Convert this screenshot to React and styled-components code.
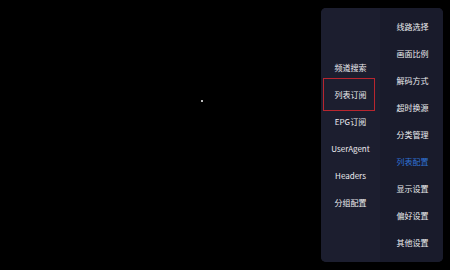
import React, { useState } from 'react';
import styled, { createGlobalStyle } from 'styled-components';

const GlobalStyle = createGlobalStyle`
  html, body {
    margin: 0;
    padding: 0;
    background: #000;
  }
  body {
    font-family: "Noto Sans CJK SC", "Noto Sans", sans-serif;
  }
`;

const leftItems = ['频道搜索', '列表订阅', 'EPG订阅', 'UserAgent', 'Headers', '分组配置'];
const rightItems = ['线路选择', '画面比例', '解码方式', '超时换源', '分类管理', '列表配置', '显示设置', '偏好设置', '其他设置'];

function App() {
  const [focused, setFocused] = useState(1);
  const [active, setActive] = useState(5);

  return (
    <>
      <GlobalStyle />
      <Screen>
        <Dot />
        <Panel>
          <SubColumn>
            {leftItems.map((label, i) => (
              <SubItem key={label} focused={i === focused} onClick={() => setFocused(i)}>
                {label}
              </SubItem>
            ))}
          </SubColumn>
          <MainColumn>
            {rightItems.map((label, i) => (
              <MainItem key={label} active={i === active} onClick={() => setActive(i)}>
                {label}
              </MainItem>
            ))}
          </MainColumn>
        </Panel>
      </Screen>
    </>
  );
}

const Screen = styled.div`
  position: relative;
  width: 450px;
  height: 270px;
  background: #000;
  display: flex;
  justify-content: flex-end;
  align-items: flex-start;
  padding: 8px 7px 0 0;
  box-sizing: border-box;
`;

const Dot = styled.div`
  position: absolute;
  left: 201px;
  top: 100px;
  width: 1.5px;
  height: 1.5px;
  background: #bbb;
`;

const Panel = styled.div`
  width: 122px;
  height: 254px;
  border-radius: 5px;
  overflow: hidden;
  display: flex;
  background: #1b1d2d;
`;

const SubColumn = styled.div`
  width: 59px;
  display: flex;
  flex-direction: column;
  justify-content: center;
  align-items: center;
  background: #1c1e2f;
`;

const SubItem = styled.div`
  box-sizing: border-box;
  width: 52px;
  height: 27px;
  margin-left: -4px;
  padding-left: 4px;
  display: flex;
  align-items: center;
  justify-content: center;
  font-size: 8px;
  color: #ececf0;
  border: 1.5px solid ${(props) => (props.focused ? '#b8262f' : 'transparent')};
  ${(props) => props.focused && `
    height: 33px;
    margin: -3px 0 -3px -4px;
  `}
  cursor: pointer;
`;

const MainColumn = styled.div`
  flex: 1;
  display: flex;
  flex-direction: column;
  padding-top: 5px;
  background: #191b2b;
`;

const MainItem = styled.div`
  height: 27px;
  display: flex;
  align-items: center;
  justify-content: center;
  padding-left: 2px;
  font-size: 8px;
  color: ${(props) => (props.active ? '#2f72d6' : '#ececf0')};
  cursor: pointer;
`;

export default App;
